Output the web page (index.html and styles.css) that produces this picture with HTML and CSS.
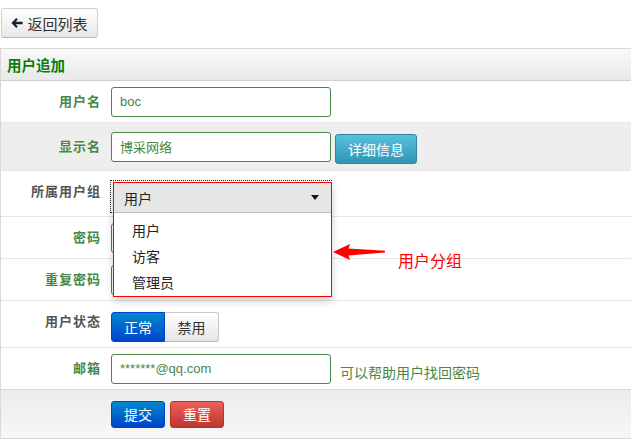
FILE: index.html
```html
<!DOCTYPE html>
<html lang="zh-CN">
<head>
    <meta charset="UTF-8">
    <meta name="viewport" content="width=device-width, initial-scale=1.0">
    <title>用户追加</title>
    <link rel="stylesheet" href="styles.css">
</head>
<body>

    <div class="toolbar">
        <button class="btn btn-back">
            <svg class="icon-back" viewBox="0 0 12 12" width="12" height="12"><path d="M5.2 1 L0.4 6 L5.2 11 L6.8 9.4 L4.6 7.2 H11.6 V4.8 H4.6 L6.8 2.6 Z"/></svg>
            返回列表
        </button>
    </div>

    <div class="panel">
        <div class="panel-head">用户追加</div>

        <div class="row">
            <label class="label">用户名</label>
            <input class="field" type="text" value="boc">
        </div>

        <div class="row row-alt">
            <label class="label">显示名</label>
            <input class="field" type="text" value="博采网络">
            <button class="btn btn-info">详细信息</button>
        </div>

        <div class="row row-group">
            <label class="label muted">所属用户组</label>
            <div class="select-wrap">
                <div class="select-open">
                    <div class="select-current">
                        <span>用户</span>
                        <span class="caret"></span>
                    </div>
                    <ul class="select-list">
                        <li>用户</li>
                        <li>访客</li>
                        <li>管理员</li>
                    </ul>
                </div>
            </div>
        </div>

        <div class="row">
            <label class="label">密码</label>
            <input class="field" type="password">
        </div>

        <div class="row">
            <label class="label">重复密码</label>
            <input class="field" type="password">
        </div>

        <div class="row row-status">
            <label class="label muted">用户状态</label>
            <div class="seg">
                <button class="btn btn-primary">正常</button>
                <button class="btn btn-default">禁用</button>
            </div>
        </div>

        <div class="row row-email">
            <label class="label">邮箱</label>
            <input class="field" type="text" value="*******@qq.com">
            <span class="hint">可以帮助用户找回密码</span>
        </div>

        <div class="actions">
            <button class="btn btn-primary btn-sm">提交</button>
            <button class="btn btn-danger btn-sm">重置</button>
        </div>
    </div>

    <!-- annotation over the dropdown -->
    <div class="note">
        <svg class="note-arrow" viewBox="0 0 52 16" width="52" height="16"><path d="M0 8 L17 0 L15.5 4.5 L52 6.8 L52 8.6 L15.5 11.5 L17 16 Z"/></svg>
        <span class="note-text">用户分组</span>
    </div>

</body>
</html>
```

FILE: styles.css
```css
* {
    box-sizing: border-box;
}
body {
    margin: 0;
    font-family: "Liberation Sans", "Noto Sans CJK SC", sans-serif;
    font-size: 14px;
    color: #333;
    background-color: #fff;
    position: relative;
}
.toolbar {
    padding: 8px 0 10px 1px;
}
.btn {
    display: inline-flex;
    align-items: center;
    justify-content: center;
    font-family: inherit;
    font-size: 14px;
    border: 1px solid #ccc;
    border-radius: 3px;
    padding: 0;
    cursor: pointer;
}
.btn-back {
    width: 97px;
    height: 30px;
    font-size: 15px;
    color: #333;
    background: linear-gradient(#ffffff, #e8e8e8);
    border-color: #cfcfcf #cfcfcf #b5b5b5;
    gap: 4px;
}
.icon-back {
    fill: #1c1c3a;
}
.panel {
    border: 1px solid #d8d8d8;
    border-right: none;
}
.panel-head {
    height: 32px;
    display: flex;
    align-items: center;
    padding-left: 6px;
    font-size: 14.5px;
    font-weight: bold;
    color: #0a7d0a;
    background: linear-gradient(#f9f9f9, #e9e9e9);
    border-bottom: 1px solid #cfcfcf;
}
.row {
    display: flex;
    align-items: center;
    height: 42px;
    border-bottom: 1px solid #e6e6e6;
}
.row-alt {
    height: 48px;
    background-color: #eee;
}
.row-group {
    height: 46px;
    align-items: flex-start;
}
.row-status {
    height: 47px;
    align-items: flex-start;
}
.row-email {
    border-bottom-color: #d8d8d8;
}
.label {
    width: 100px;
    margin-right: 10px;
    text-align: right;
    font-size: 13px;
    font-weight: bold;
    letter-spacing: 1px;
    line-height: 20px;
    color: #468847;
}
.label.muted {
    color: #555;
}
.row-group .label,
.row-status .label {
    margin-top: 11px;
}
.field {
    width: 220px;
    height: 30px;
    padding: 0 8px;
    border: 1px solid #468847;
    border-radius: 3px;
    font-family: inherit;
    font-size: 13px;
    color: #468847;
    background-color: #fff;
}
.btn-info {
    width: 82px;
    height: 30px;
    margin-left: 4px;
    margin-top: 4px;
    color: #fff;
    background: linear-gradient(#5bc0de, #2f96b4);
    border-color: #2a87a3;
}
.hint {
    margin-left: 9px;
    margin-top: 6px;
    font-size: 14px;
    color: #468847;
}
.select-wrap {
    position: relative;
    width: 222px;
    height: 33px;
    margin-top: 9px;
    margin-left: -1px;
    border: 1px dotted #222;
}
.select-open {
    position: absolute;
    left: 2px;
    top: 1px;
    width: 219px;
    border: 1px solid #f00;
    background-color: #fff;
    box-shadow: 0 4px 8px rgba(0, 0, 0, 0.2);
    z-index: 2;
}
.select-current {
    height: 30px;
    display: flex;
    align-items: center;
    justify-content: space-between;
    padding: 0 12px 0 10px;
    background-color: #e6e6e6;
    border-bottom: 1px solid #bbb;
    color: #222;
}
.caret {
    width: 0;
    height: 0;
    border-left: 4px solid transparent;
    border-right: 4px solid transparent;
    border-top: 5px solid #111;
}
.select-list {
    list-style: none;
    margin: 0;
    padding: 5px 0 0;
}
.select-list li {
    height: 26px;
    line-height: 26px;
    padding-left: 18px;
    color: #222;
}
.seg {
    display: flex;
    margin-top: 11px;
}
.seg .btn {
    width: 54px;
    height: 30px;
}
.seg .btn-primary {
    border-radius: 3px 0 0 3px;
}
.seg .btn-default {
    border-radius: 0 3px 3px 0;
    border-left: none;
}
.btn-primary {
    color: #fff;
    background: linear-gradient(#0088cc, #0044cc);
    border-color: #0044cc;
}
.btn-default {
    color: #333;
    background: linear-gradient(#ffffff, #e6e6e6);
    border-color: #c8c8c8 #c8c8c8 #b3b3b3;
}
.btn-danger {
    color: #fff;
    background: linear-gradient(#ee5f5b, #bd362f);
    border-color: #b8342e;
}
.actions {
    display: flex;
    align-items: center;
    gap: 5px;
    height: 48px;
    padding-left: 110px;
    background: linear-gradient(#ececec, #f7f7f7);
}
.btn-sm {
    width: 54px;
    height: 27px;
}
.note {
    position: absolute;
    left: 333px;
    top: 244px;
    display: flex;
    align-items: flex-start;
    z-index: 3;
}
.note-arrow {
    fill: #f00;
}
.note-text {
    margin-left: 13px;
    margin-top: 7px;
    font-size: 16px;
    line-height: 22px;
    color: #f00;
}
```
